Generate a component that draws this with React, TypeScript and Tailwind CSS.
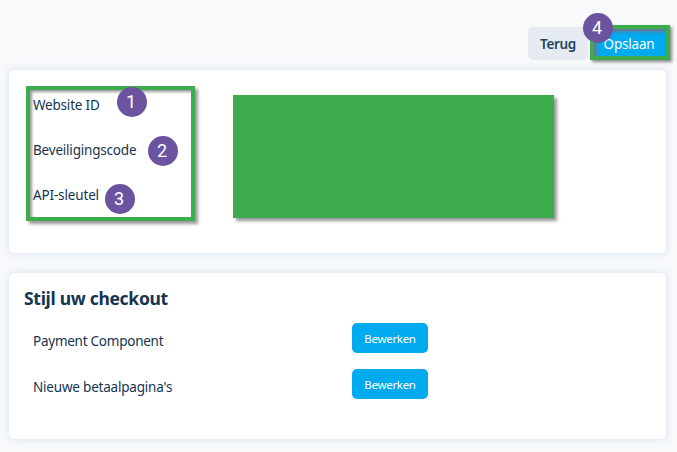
import type { ReactNode } from "react";

function Badge({ n, className }: { n: number; className: string }) {
  return (
    <span
      className={`absolute z-20 flex size-[30px] items-center justify-center rounded-full bg-[#6b539f] pr-px font-['Roboto',Arial,sans-serif] text-[18px] leading-none text-white ${className}`}
    >
      {n}
    </span>
  );
}

function Card({ className, children }: { className: string; children: ReactNode }) {
  return (
    <section className={`relative rounded-[5px] bg-white shadow-[0_0_6px_rgba(130,165,200,0.3)] ${className}`}>
      {children}
    </section>
  );
}

function StyleRow({ label, tracking }: { label: string; tracking: string }) {
  return (
    <div className="flex h-[30px] items-center">
      <span className={`w-[319px] pt-[5px] text-[13.5px] leading-5 ${tracking}`}>{label}</span>
      <button className="h-[30px] w-[76px] rounded-[5px] bg-[#00aaee] pt-[2px] text-[11.5px] leading-4 tracking-[-0.3px] text-white">
        Bewerken
      </button>
    </div>
  );
}

export default function App() {
  return (
    <main className="h-[452px] w-[677px] overflow-hidden bg-[#f7f9fb] px-[9px] font-['Noto_Sans','Open_Sans',sans-serif] text-[#14344f]">
      <header className="flex h-[70px] items-start pt-[25px] pl-[519px]">
        <button className="mt-[2px] h-[33px] w-[60px] shrink-0 rounded-[5px] bg-[#e6ebf2] pt-[2px] text-[13.5px] font-semibold tracking-[-0.3px] text-[#24435f]">
          Terug
        </button>
        <div className="relative ml-[2px] h-[35px] w-[80px] shrink-0">
          <button className="flex h-[35px] w-[80px] items-center justify-center bg-[#00aaee] pt-[4px] pr-[2px] text-[13.5px] tracking-[-0.2px] text-white">
            Opslaan
          </button>
          <span className="absolute inset-0 border-4 border-[#3dac4c] shadow-[2px_2px_3px_rgba(0,0,0,0.45),inset_3px_3px_3px_rgba(120,110,130,0.8)]" />
          <Badge n={4} className="-left-[7.5px] -top-[12px]" />
        </div>
      </header>

      <Card className="flex h-[183px] w-[657px]">
        <div className="relative ml-[17px] mt-[16px] flex h-[135px] w-[169px] flex-col gap-[25px] border-4 border-[#3dac4c] pl-[3px] pt-[5px] text-[13.5px] leading-5 shadow-[3px_3px_3px_rgba(0,0,0,0.4),inset_2px_2px_3px_rgba(0,0,0,0.4)]">
          <span className="w-max tracking-[-0.2px]">Website ID</span>
          <span className="w-max tracking-[-0.2px]">Beveiligingscode</span>
          <span className="w-max tracking-[-0.15px]">API-sleutel</span>
          <Badge n={1} className="left-[86.5px] -top-[3.5px]" />
          <Badge n={2} className="left-[117.5px] top-[45.5px]" />
          <Badge n={3} className="left-[74.5px] top-[93.5px]" />
        </div>
        <div className="ml-[38px] mt-[25px] h-[123px] w-[321px] bg-[#3dac4c] shadow-[3px_3px_3px_rgba(0,0,0,0.4)]" />
      </Card>

      <Card className="mt-[20px] h-[166px] w-[657px]">
        <h2 className="pl-[15px] pt-[13px] text-[17.5px] font-bold leading-[25px] tracking-[-0.3px]">
          Stijl uw checkout
        </h2>
        <div className="mt-[12px] flex flex-col gap-[16px] pl-[24px]">
          <StyleRow label="Payment Component" tracking="tracking-[-0.25px]" />
          <StyleRow label="Nieuwe betaalpagina's" tracking="tracking-[-0.2px]" />
        </div>
      </Card>
    </main>
  );
}
